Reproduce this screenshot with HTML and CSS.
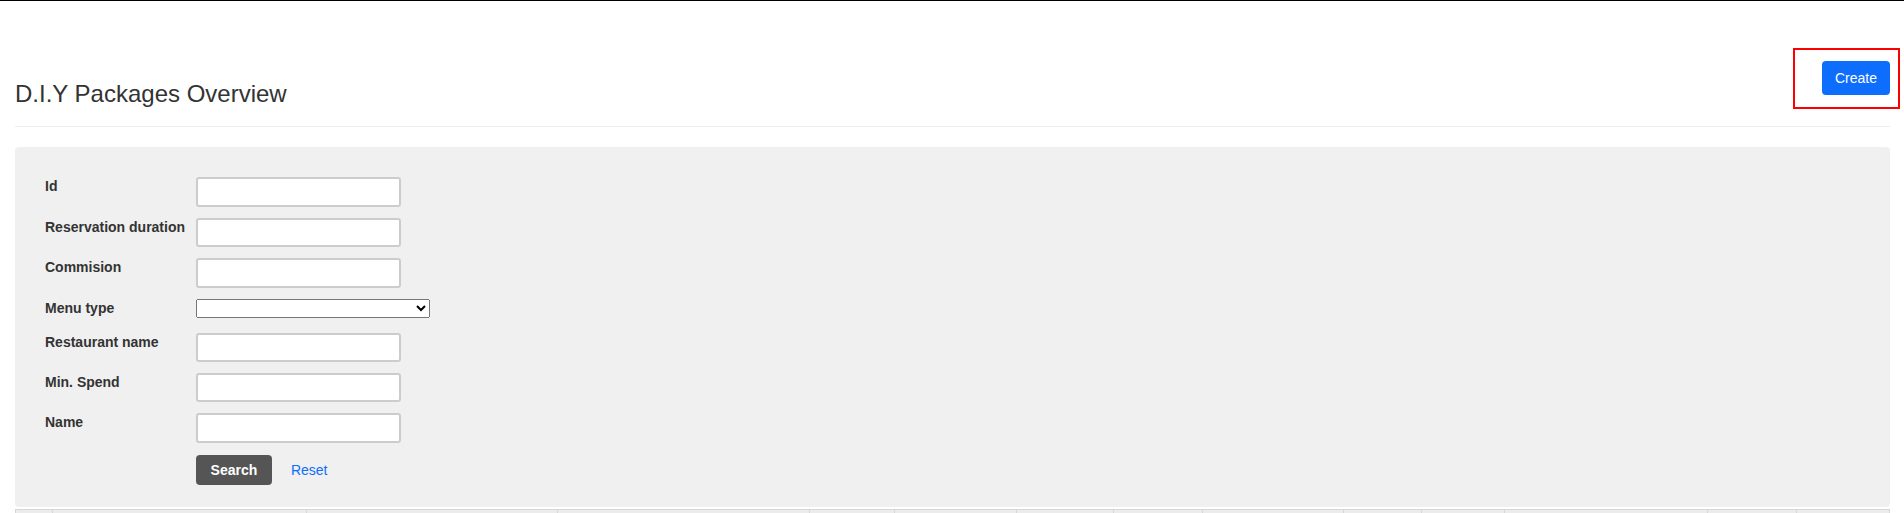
FILE: index.html
```html
<!DOCTYPE html>
<html lang="en">
<head>
<meta charset="UTF-8">
<title>D.I.Y Packages Overview</title>
<link rel="stylesheet" href="styles.css">
</head>
<body>
<div class="topline"></div>
<div class="container">
	<div class="page-header">
		<h3>D.I.Y Packages Overview</h3>
		<button class="btn btn-primary" type="button">Create</button>
		<div class="highlight"></div>
	</div>

	<form class="filter">
		<div class="row">
			<label for="f-id">Id</label>
			<input id="f-id" type="text">
		</div>
		<div class="row">
			<label for="f-duration">Reservation duration</label>
			<input id="f-duration" type="text">
		</div>
		<div class="row">
			<label for="f-commision">Commision</label>
			<input id="f-commision" type="text">
		</div>
		<div class="row">
			<label for="f-menu">Menu type</label>
			<select id="f-menu">
				<option></option>
			</select>
		</div>
		<div class="row">
			<label for="f-restaurant">Restaurant name</label>
			<input id="f-restaurant" type="text">
		</div>
		<div class="row">
			<label for="f-spend">Min. Spend</label>
			<input id="f-spend" type="text">
		</div>
		<div class="row">
			<label for="f-name">Name</label>
			<input id="f-name" type="text">
		</div>
		<div class="actions">
			<button class="btn btn-dark" type="submit">Search</button>
			<a class="reset" href="#">Reset</a>
		</div>
	</form>

	<table class="grid">
		<colgroup>
			<col class="c1"><col class="c2"><col class="c3"><col class="c4"><col class="c5">
			<col class="c6"><col class="c7"><col class="c8"><col class="c9"><col class="c10">
			<col class="c11"><col class="c12"><col class="c13"><col class="c14">
		</colgroup>
		<thead>
			<tr>
				<th>&nbsp;</th><th>&nbsp;</th><th>&nbsp;</th><th>&nbsp;</th><th>&nbsp;</th>
				<th>&nbsp;</th><th>&nbsp;</th><th>&nbsp;</th><th>&nbsp;</th><th>&nbsp;</th>
				<th>&nbsp;</th><th>&nbsp;</th><th>&nbsp;</th><th>&nbsp;</th>
			</tr>
		</thead>
	</table>
</div>
</body>
</html>
```

FILE: styles.css
```css
body {
	margin: 0;
	background-color: #fff;
	font-family: "Liberation Sans", Arial, Helvetica, sans-serif;
	font-size: 14px;
	color: #333;
}

.topline {
	height: 1px;
	background-color: #000;
}

.container {
	padding: 0 14px 0 15px;
}

.page-header {
	position: relative;
	display: flex;
	justify-content: space-between;
	align-items: flex-start;
	margin: 60px 0 20px;
	padding-bottom: 9px;
	border-bottom: 1px solid #eee;
}

.page-header h3 {
	margin: 20px 0 10px;
	font-size: 24px;
	font-weight: normal;
	line-height: 1.1;
}

/* annotation frame round the create button */
.highlight {
	position: absolute;
	top: -13px;
	right: -10px;
	width: 107px;
	height: 61px;
	box-sizing: border-box;
	border: 2px solid #f00;
}

.btn {
	font-family: inherit;
	font-size: 14px;
	border: 0;
	cursor: pointer;
}

.btn-primary {
	height: 34px;
	padding: 0 13px;
	line-height: 20px;
	color: #fff;
	background-color: #0d6efd;
	border-radius: 4px;
}

.btn-dark {
	height: 30px;
	padding: 0 14.6px;
	line-height: 18px;
	font-weight: bold;
	color: #fff;
	background-color: #555;
	border-radius: 4px;
}

.filter {
	background-color: #f0f0f0;
	border-radius: 4px;
	padding: 30px 30px 22px;
}

.row {
	display: flex;
	align-items: flex-start;
	margin-bottom: 11px;
}

.row label {
	flex: 0 0 151px;
	font-weight: bold;
	line-height: 18px;
	margin-bottom: 5px;
}

.row input {
	width: 205px;
	height: 29.4px;
	box-sizing: border-box;
	margin: 0;
	border: 2px solid #ccc;
	border-radius: 3px;
	background-color: #fff;
}

.row select {
	width: 234px;
	height: 19px;
	margin: 0;
	font-size: 13px;
}

.actions {
	display: flex;
	align-items: center;
	gap: 19px;
	margin-left: 151px;
	padding-top: 1px;
}

.reset {
	color: #0d6efd;
	text-decoration: none;
}

table.grid {
	width: 100%;
	margin-top: 2px;
	table-layout: fixed;
	border-collapse: collapse;
	border: 1px solid #d6d6d6;
}

table.grid th {
	height: 36px;
	padding: 8px;
	background-color: #ececec;
	border: 1px solid #d6d6d6;
}

col.c1 { width: 37px; }
col.c2 { width: 254px; }
col.c3 { width: 251px; }
col.c4 { width: 252px; }
col.c5 { width: 85px; }
col.c6 { width: 122px; }
col.c7 { width: 97px; }
col.c8 { width: 89px; }
col.c9 { width: 141px; }
col.c10 { width: 78px; }
col.c11 { width: 83px; }
col.c12 { width: 203px; }
col.c13 { width: 89px; }
col.c14 { width: 93px; }
```
